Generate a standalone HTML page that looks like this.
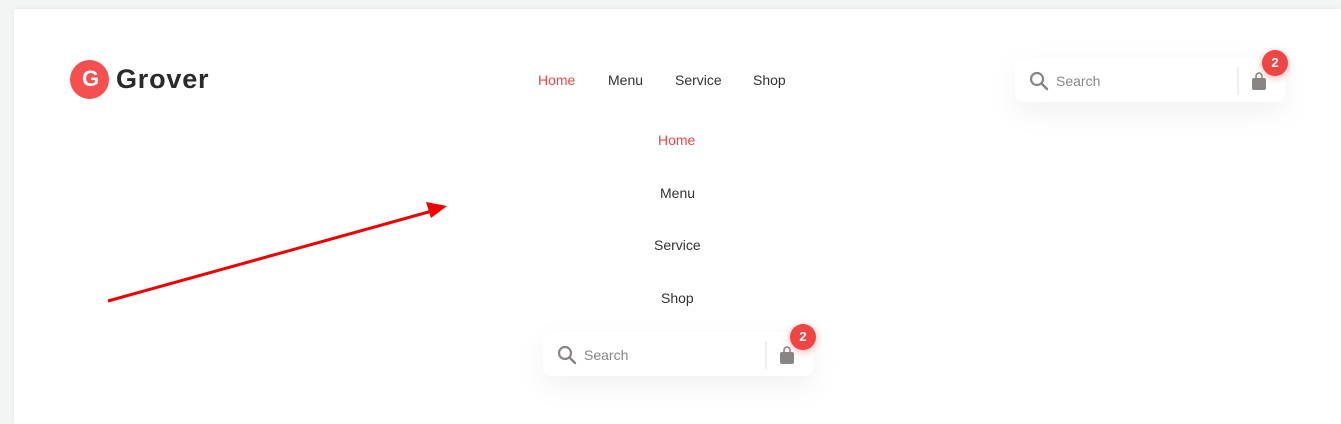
<!DOCTYPE html>
<html><head><style>
body{margin:0;width:1341px;height:424px;background:#f3f4f4;font-family:"Liberation Sans",sans-serif;overflow:hidden;position:relative}
.panel{position:absolute;left:14px;top:9px;right:0;bottom:0;background:#fff;box-shadow:0 0 3px rgba(0,0,0,.08)}
.a{position:absolute}
.nav{font-size:14px;color:#333}
.box{position:absolute;width:270px;height:44px;background:#fff;border-radius:8px;box-shadow:0 10px 30px rgba(0,0,0,.06)}
.box .s{position:absolute;left:41px;top:15px;font-size:14px;color:#888}
.box .d{position:absolute;left:222px;top:9px;width:2px;height:28px;background:#eee}
.badge{position:absolute;left:247px;top:-8px;width:26px;height:26px;border-radius:50%;background:#f04545;color:#fff;font-weight:bold;font-size:13px;text-align:center;line-height:26px;box-shadow:0 2px 8px rgba(240,69,69,.4)}
</style></head><body>
<div class="panel"></div>
<div class="a" style="left:70px;top:60px;width:39px;height:39px;border-radius:50%;background:#f45050"></div>
<div class="a" style="left:82px;top:66px;color:#fff;font-weight:bold;font-size:22px">G</div>
<div class="a" style="left:116px;top:64px;font-size:27px;font-weight:bold;color:#2a2a2a;letter-spacing:0.8px">Grover</div>
<div class="a nav" style="left:538px;top:72px;color:#f04545">Home</div>
<div class="a nav" style="left:608px;top:72px">Menu</div>
<div class="a nav" style="left:675px;top:72px">Service</div>
<div class="a nav" style="left:753px;top:72px">Shop</div>
<div class="a nav" style="left:658px;top:132px;color:#f04545">Home</div>
<div class="a nav" style="left:660px;top:185px">Menu</div>
<div class="a nav" style="left:654px;top:237px">Service</div>
<div class="a nav" style="left:661px;top:290px">Shop</div>
<svg class="a" style="left:0;top:0" width="1341" height="424"><line x1="108" y1="301" x2="432" y2="211" stroke="#e00" stroke-width="3"/><polygon points="447,206 426,202 431,218" fill="#e00"/></svg>
<div class="box" style="left:1015px;top:58px">
<svg class="a" style="left:14px;top:13px" width="20" height="20"><circle cx="8" cy="8" r="6" fill="none" stroke="#8a8585" stroke-width="2.2"/><line x1="12.5" y1="12.5" x2="18" y2="18" stroke="#8a8585" stroke-width="2.4" stroke-linecap="round"/></svg>
<div class="s">Search</div><div class="d"></div>
<svg class="a" style="left:236px;top:13px" width="16" height="20"><path d="M5 8V5a3 3 0 0 1 6 0v3" fill="none" stroke="#8a8585" stroke-width="1.6"/><rect x="1" y="7" width="14" height="12" rx="2" fill="#8a8585"/></svg>
<div class="badge">2</div></div>
<div class="box" style="left:543px;top:332px">
<svg class="a" style="left:14px;top:13px" width="20" height="20"><circle cx="8" cy="8" r="6" fill="none" stroke="#8a8585" stroke-width="2.2"/><line x1="12.5" y1="12.5" x2="18" y2="18" stroke="#8a8585" stroke-width="2.4" stroke-linecap="round"/></svg>
<div class="s">Search</div><div class="d"></div>
<svg class="a" style="left:236px;top:13px" width="16" height="20"><path d="M5 8V5a3 3 0 0 1 6 0v3" fill="none" stroke="#8a8585" stroke-width="1.6"/><rect x="1" y="7" width="14" height="12" rx="2" fill="#8a8585"/></svg>
<div class="badge">2</div></div>
</body></html>
